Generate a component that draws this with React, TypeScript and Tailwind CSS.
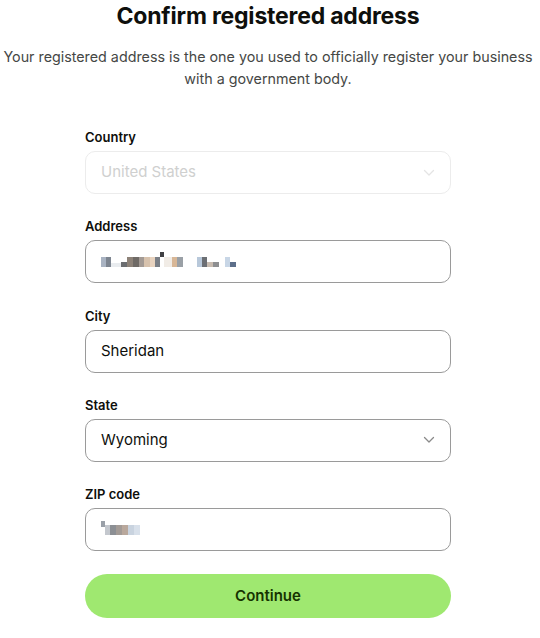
// Registered address confirmation form (Wise-style onboarding step)

const ink = 'text-[#0e0f0c]';

type Block = { w: number; c: string; h?: number; dy?: number };

// pixelated redaction for the hidden values
const addressBlocks: Block[] = [
  { w: 5, c: '#a9b3c2' },
  { w: 5, c: '#7d8590' },
  { w: 10, c: '#e9ecef', h: 4, dy: 6 },
  { w: 6, c: '#6b6d70', h: 5, dy: 5 },
  { w: 6, c: '#8d8278' },
  { w: 6, c: '#6f6a66' },
  { w: 5, c: '#a39a94' },
  { w: 6, c: '#d7c2ad' },
  { w: 5, c: '#e8d3bf' },
  { w: 5, c: '#7a7f86' },
  { w: 4, c: '#3f4043', h: 5, dy: -5 },
  { w: 8, c: '#f1ece6' },
  { w: 5, c: '#d8b797' },
  { w: 6, c: '#9aa0a6' },
  { w: 14, c: '#ffffff' },
  { w: 5, c: '#b8c8da' },
  { w: 5, c: '#6c6f74' },
  { w: 6, c: '#c7bbb0', h: 5, dy: 5 },
  { w: 6, c: '#8e8f91', h: 5, dy: 5 },
  { w: 6, c: '#ffffff' },
  { w: 5, c: '#c8d6e6' },
  { w: 6, c: '#5d6f8a', h: 5, dy: 5 },
];

const zipBlocks: Block[] = [
  { w: 4, c: '#9aa0a8', h: 6, dy: -4 },
  { w: 5, c: '#c4c8ce' },
  { w: 6, c: '#8c8f94' },
  { w: 6, c: '#a39b96' },
  { w: 6, c: '#b9a89c' },
  { w: 6, c: '#c9d3df' },
  { w: 6, c: '#d8e0ea' },
];

function Pixels({ blocks }: { blocks: Block[] }) {
  return (
    <div className="flex items-start h-[10px]">
      {blocks.map((b, i) => (
        <span
          key={i}
          className="block"
          style={{
            width: b.w,
            height: b.h ?? 10,
            background: b.c,
            marginTop: b.dy ?? 0,
          }}
        />
      ))}
    </div>
  );
}

function Chevron({ light }: { light?: boolean }) {
  return (
    <svg width="12" height="8" viewBox="0 0 12 8" fill="none" className="shrink-0">
      <polyline
        points="1.5,1.5 6,6 10.5,1.5"
        stroke={light ? '#e4e4e4' : '#8a8a8a'}
        strokeWidth="1.3"
        strokeLinecap="round"
        strokeLinejoin="round"
      />
    </svg>
  );
}

function Field({
  label,
  children,
  disabled,
  select,
}: {
  label: string;
  children: React.ReactNode;
  disabled?: boolean;
  select?: boolean;
}) {
  return (
    <div className="flex flex-col gap-[4px]">
      <label className={`text-[13px] leading-[20px] font-semibold ${ink}`}>{label}</label>
      <div
        className={`h-[43px] rounded-[10px] border flex items-center justify-between pl-[15px] pr-[15px] bg-white ${
          disabled ? 'border-[#ececec]' : 'border-[#9a9a9a]'
        }`}
      >
        {children}
        {select && <Chevron light={disabled} />}
      </div>
    </div>
  );
}

export default function App() {
  return (
    <div
      className="min-h-screen bg-white pr-[4px]"
      style={{ fontFamily: 'Inter, "Liberation Sans", sans-serif' }}
    >
      <div className="flex flex-col items-center">
        <h1 className={`text-[23px] leading-[32px] font-bold tracking-[-0.2px] ${ink}`}>
          Confirm registered address
        </h1>
        <p className="mt-[14px] text-[14.3px] leading-[22px] text-[#454745] text-center whitespace-nowrap">
          Your registered address is the one you used to officially register your business
          <br />
          with a government body.
        </p>
      </div>

      <form className="w-[366px] mx-auto mt-[37px] flex flex-col gap-[22.3px]">
        <Field label="Country" disabled select>
          <span className="text-[15px] text-[#cfd0cf]">United States</span>
        </Field>
        <Field label="Address">
          <Pixels blocks={addressBlocks} />
        </Field>
        <Field label="City">
          <span className={`text-[15px] ${ink}`}>Sheridan</span>
        </Field>
        <Field label="State" select>
          <span className={`text-[15px] ${ink}`}>Wyoming</span>
        </Field>
        <Field label="ZIP code">
          <Pixels blocks={zipBlocks} />
        </Field>

        <button
          type="button"
          className="mt-[1px] h-[44px] rounded-full bg-[#9fe870] text-[15px] font-semibold text-[#163300]"
        >
          Continue
        </button>
      </form>
    </div>
  );
}
